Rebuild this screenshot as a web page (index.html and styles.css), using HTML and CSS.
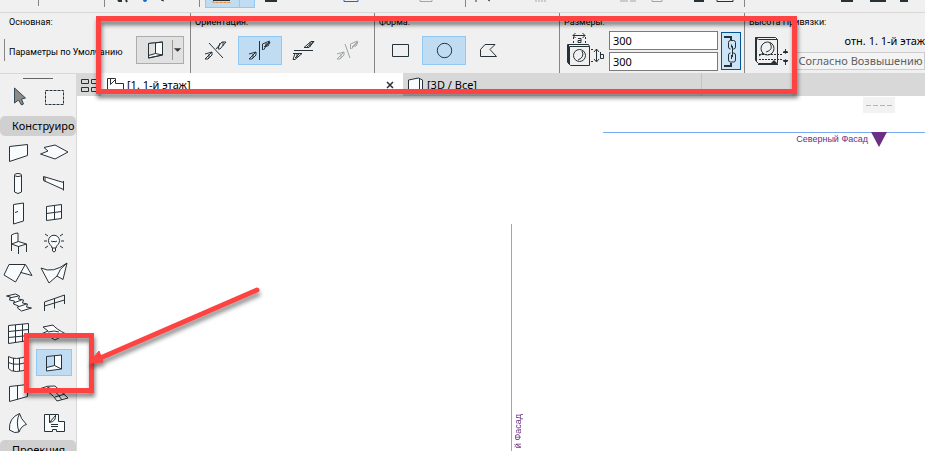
FILE: index.html
```html
<!DOCTYPE html>
<html lang="ru">
<head>
<meta charset="utf-8">
<title>План этажа</title>
<link rel="stylesheet" href="styles.css">
</head>
<body>
<div class="strip">
  <svg width="925" height="12" viewBox="0 0 925 12" aria-hidden="true">
    <path class="rule" d="M38.500 0v6M104.500 0v7M199.500 0v7M465.500 0v7M744.500 0v7"/>
    <rect class="lit" x="205.500" y="-2" width="49" height="9.500"/>
    <path class="litline" d="M239.500 0v7"/>
    <path class="dark" d="M118 0l1 1h3M126 0l1 2M213 0h17M265 1h12M271 0v1M694 1h10M841 1h12M870 1h16M900 1h8"/>
    <circle cx="145" cy="0" r="2" fill="#1769d2"/>
    <path d="M161 0l3 1M476 0v2M488 0l2 1" class="thin"/>
    <path d="M213 1v1.500h17V1" fill="none" stroke="#f28a2e" stroke-dasharray="3 1"/>
    <path d="M344 0v1.500h14V0" fill="none" stroke="#1769d2"/>
    <path d="M420 0v1.500h12V0M536 0v2M539 0v2M542 0v2M545 0v2M620 1h8M630 1h6M652 0v1.500h10V0" fill="none" stroke="#a5a5a5"/>
    <path d="M717 0v1.500h16V0" class="thin"/>
  </svg>
</div>

<header class="info">
  <section class="group group-main">
    <h2>Основная:</h2>
    <div class="main-row">
      <span class="grip"></span>
      <span class="preset">Параметры по Умолчанию</span>
      <button class="type" aria-label="Световой люк">
        <svg width="35" height="26" viewBox="0 0 35 26"><path class="paper" d="M11.500 6.500l14-1.500v13l-14 3z"/><path d="M11.500 6.500l7-1v11l-7 2z" fill="#e1e1e1"/><path class="thin" d="M11.500 6.500l14-1.500v13l-14 3zM18.500 6v10.500M11.500 18.500l7-2 7 1.500"/></svg>
        <svg class="drop" width="12" height="20" viewBox="0 0 12 20"><path d="M1 8h8l-4 4z" fill="#333"/></svg>
      </button>
    </div>
  </section>
  <section class="group">
    <h2>Ориентация:</h2>
    <div class="choices">
      <button aria-label="Наклонно"><svg width="42" height="27" viewBox="0 0 42 27"><path class="thin" d="M14 6l14 15"/><path class="thin" d="M10 17l7-2-7 7h3l4-4v-3M14 17v4M21 12l6-7h4l-6 7h-2l2-6M28 5v4"/></svg></button>
      <button class="on" aria-label="Вертикально"><svg width="42" height="27" viewBox="0 0 42 27"><path class="thin" d="M20.500 4v19"/><path class="thin" d="M10 17l7-2-7 7h3l4-4v-3M14 17v4M23.500 13V7l7-3-6 9M25 10l6-5-2 4h-3M27 6v4"/></svg></button>
      <button aria-label="Горизонтально"><svg width="42" height="27" viewBox="0 0 42 27"><path class="thin" d="M11 13.500h19"/><path class="thin" d="M10 16.500h9l-7 6h-2l2-6M12 21l4-4M14 17v4M21 10.500l7-6h3l-5 6zM27 5v5M24 10l6-5"/></svg></button>
      <button class="off" aria-label="Свободно" disabled><svg width="42" height="27" viewBox="0 0 42 27"><path class="thin" d="M18 7l5 14"/><path class="thin" d="M10 17l7-2-7 7h3l4-4v-3M14 17v4M23.500 12V7l7-3-6 8M25 10l6-5-2 4h-3"/></svg></button>
    </div>
  </section>
  <section class="group">
    <h2>Форма:</h2>
    <div class="choices">
      <button aria-label="Прямоугольник"><svg width="42" height="27" viewBox="0 0 42 27"><path class="thin" d="M13.500 7.500h16v12h-16z"/></svg></button>
      <button class="on" aria-label="Круг"><svg width="42" height="27" viewBox="0 0 42 27"><circle class="thin" cx="21.500" cy="13.500" r="7.200"/></svg></button>
      <button aria-label="Многоугольник"><svg width="42" height="27" viewBox="0 0 42 27"><path class="thin" d="M18 7.500h10l-5 5 6.500 7h-16v-7z"/></svg></button>
    </div>
  </section>
  <section class="group group-size">
    <h2>Размеры:</h2>
    <div class="size-row">
      <svg class="size-icon" width="39" height="36" viewBox="0 0 39 36" aria-hidden="true">
        <path class="thin" d="M.500 12.500h21l1 2v19h-19l-3-3zM2.500 14.500h20M2.500 14.500v18M1.500 13v18"/><circle class="thin" cx="12.500" cy="23.500" r="6"/><path class="thin" d="M15 19q3 6-4 9"/>
        <path class="thin" d="M6 3.500h12M8.500 1L6 3.500 8.500 6M15.500 1L18 3.500 15.500 6"/><path class="thin" stroke-dasharray="2 2" d="M6.500 5v7M18.500 5v7M24 17.500h4M24 29.500h4"/>
        <path class="thin" d="M29.500 17v12M27 20l2.500-3 2.500 3M27 27l2.500 3 2.500-3"/><path class="thin" d="M11 6.500h3v4h-3v-2h3M33.500 20v6.500h3v-4h-3"/>
      </svg>
      <div class="fields">
        <input type="text" value="300" aria-label="Размер a">
        <input type="text" value="300" aria-label="Размер b">
      </div>
      <button class="link" aria-label="Связать размеры">
        <svg width="18" height="36" viewBox="0 0 18 36"><path class="dark" d="M2 4h7v3M2 33h7v-3"/><path class="thin" d="M6.500 14V9.500q0-2 2-2h3q2 0 2 2V14q0 2-2 2h-1M6.500 22v5q0 2 2 2h3q2 0 2-2v-5q0-2-2-2h-1M9.500 11.500v3M10.500 13v11M9.500 22v4M6.500 14q0 2 2 2M6.500 22q0-2 2-2"/></svg>
      </button>
    </div>
  </section>
  <section class="group group-anchor">
    <h2>Высота Привязки:</h2>
    <div class="anchor-row">
      <svg width="36" height="32" viewBox="0 0 36 32" aria-hidden="true">
        <path class="thin" d="M1.500 1.500l3 2h19v24h-19l-3-3zM1.500 1.500h20l2 2M2.500 2v24M4 28.500h20"/><circle class="thin" cx="13.500" cy="12.500" r="6.500"/><path class="thin" d="M9 17l-4 3M16 7q4 7-4 9"/>
        <path class="thin" stroke-dasharray="2 1" d="M5 18.500h24M5 23.500h24"/><path d="M17 27l3-3 3 3z" fill="#263238"/><path class="thin" d="M31.500 13v4M29 16.500h5M31.500 29v-4M29 24.500h5"/><path d="M29 15h5l-2.500 3zM29 26h5l-2.500-3z" fill="#263238"/>
      </svg>
      <div class="anchor-text">
        <span>отн. 1. 1-й этаж</span>
        <button>Согласно Возвышению</button>
      </div>
    </div>
  </section>
</header>

<div class="work">
  <aside class="tools">
    <span class="handle"></span>
    <div class="grid pick">
      <button aria-label="Указатель"><svg viewBox="0 0 36 30"><path d="M14.500 6v15l4-3 3 5 2-1-2-5 4-1z" fill="#8a8a8a" stroke="#37474f"/></svg></button>
      <button aria-label="Бегущая рамка"><svg viewBox="0 0 36 30"><path class="thin" stroke-dasharray="3 1" d="M9.500 8.500h18v14h-18z"/></svg></button>
    </div>
    <h3>Конструиро</h3>
    <div class="grid">
      <button aria-label="Стена"><svg viewBox="0 0 36 30"><path class="paper" d="M9.500 8.500l18-2v11l-18 6z"/></svg></button>
      <button aria-label="Перекрытие"><svg viewBox="0 0 36 30"><path class="paper" d="M8 9.500l11-2.500 13 7-13 7-14.500-5 7.500-3z"/></svg></button>
      <button aria-label="Колонна"><svg viewBox="0 0 36 30"><path class="paper" d="M14.500 7v17q3.500 3 7 0V7"/><ellipse class="paper" cx="18" cy="7" rx="3.500" ry="1.500"/></svg></button>
      <button aria-label="Балка"><svg viewBox="0 0 36 30"><path class="paper" d="M7.500 8.500l20 6v7l-20-9zM9 9v4.500M27.500 13v9.500"/></svg></button>
      <button aria-label="Дверь"><svg viewBox="0 0 36 30"><path class="paper" d="M13.500 6.500l10-1.500v18l-10 3z"/><path class="thin" d="M15 14.500l3-1"/></svg></button>
      <button aria-label="Окно"><svg viewBox="0 0 36 30"><path class="paper" d="M10.500 8.500l15-2v14l-15 2z"/><path class="thin" d="M18.500 7.500v14M10.500 15.500l15-2"/></svg></button>
      <button aria-label="Объект"><svg viewBox="0 0 36 30"><path class="paper" d="M11.500 16V7q3-2 6.500-2v9M11.500 16l7-2.500 8 2.500-8 2.500z"/><path class="thin" d="M11.500 16v7M18.500 18v8M26.500 16v8"/></svg></button>
      <button aria-label="Источник света"><svg viewBox="0 0 36 30"><path class="paper" d="M16 20q0-2-2-3.500a5.500 5.500 0 1 1 8 0q-2 1.500-2 3.500zM16.500 20v3q1.500 2 3 0v-3"/><path class="thin" d="M15 13l2 1 1-1 1 1 2-1M8 13h3M25 13h3M9 6l3 2M27 6l-3 2M9 20l3-2M27 20l-3-2"/></svg></button>
      <button aria-label="Крыша"><svg viewBox="0 0 36 30"><path class="paper" d="M9 6.500h16.500l6.500 11-11-3-5.500 9.500L4 17z"/><path class="thin" d="M25 7l-4.500 8"/></svg></button>
      <button aria-label="Оболочка"><svg viewBox="0 0 36 30"><path class="paper" d="M5 10q12 6 26-5l-4 16.500-6-3.500-8 7z"/><path class="thin" d="M31 5q-8 6-10 13"/></svg></button>
      <button aria-label="Лестница"><svg viewBox="0 0 36 30"><path class="paper" d="M6.500 8l9-2 4 2-1 3 5 1-1 3 5 1-1 3 5 1-10 3-4-3 1-2-5-2 1-3-5-1 1-3z"/><path class="thin" d="M9.500 10l9-2M13.500 15l8-3M17.500 19l9-3"/></svg></button>
      <button aria-label="Ограждение"><svg viewBox="0 0 36 30"><path class="thin" d="M8.500 23v-9l20-7v9M18.500 10.500v10M8.500 18l20-6"/></svg></button>
      <button aria-label="Навесная стена"><svg viewBox="0 0 36 30"><path class="paper" d="M8.500 7.500l20-2v17l-20 3z"/><path class="thin" d="M15.500 7v17.500M22.500 6v17.500M8.500 13.500l20-2M8.500 19.500l20-2"/></svg></button>
      <button aria-label="Сетка"><svg viewBox="0 0 36 30"><path class="paper" d="M7 9l10-2q3 4 13 9l-11 6q-6-5-14-6l7-3z"/><path class="thin" d="M12 14q7-2 11 0"/></svg></button>
      <button aria-label="Остекление"><svg viewBox="0 0 36 30"><path class="paper" d="M8.500 8.500q3 2 8 2t12-3v13q-6 3-12 3t-8-3z"/><path class="thin" d="M13.500 10v13M19.500 10v13M24.500 9v13M8.500 14.500q8 4 20-1"/></svg></button>
      <button class="on" aria-label="Световой люк"><svg viewBox="0 0 36 30"><path d="M10.500 19.500l8-2V8l7-1v14l-15 2z" fill="#f9fbfc"/><path class="thin" d="M10.500 8.500l15-1.500v14l-15 2zM18.500 8v9.500M10.500 19.500l8-2 7 3.500"/></svg></button>
      <button aria-label="Торец стены"><svg viewBox="0 0 36 30"><path class="paper" d="M9.500 8.500l18-2v12l-18 5z"/><path class="thin" d="M17.500 7.500v14"/></svg></button>
      <button aria-label="Поверхность"><svg viewBox="0 0 36 30"><path class="paper" d="M3 11q9-4 16-3l13 12-11 3q-6-10-18-12z"/><path class="thin" d="M11 9q8 2 15 13M14 15l10-3M19 19l10-3"/></svg></button>
      <button aria-label="Морф"><svg viewBox="0 0 36 30"><path class="paper" d="M9.500 22q-1-12 10-16.500 1 5 7 11-5 1-7.500 7.500-4 2-9.500-2z"/><path class="thin" d="M19.500 5.500q-4 8-.5 18.500"/></svg></button>
      <button aria-label="Зона"><svg viewBox="0 0 36 30"><path class="paper" d="M8.500 6.500h5v8l6-7v-1h3v7h6v10h-8v-2h-4v2h-8z"/><path class="thin" d="M13.500 6.500h6q1 7-6 8M15 16.500h7M15 18.500h7"/></svg></button>
    </div>
    <h3>Проекция</h3>
  </aside>

  <main class="view">
    <nav class="tabs">
      <button class="overview" aria-label="Обзор вкладок"><svg width="24" height="22" viewBox="0 0 24 22"><path class="thin" d="M4.500 5.500h7v4h-7zM14.500 5.500h7v4h-7zM4.500 13.500h7v4h-7zM14.500 13.500h7v4h-7z"/></svg></button>
      <div class="tab active">
        <svg width="19" height="20" viewBox="0 0 19 20" aria-hidden="true"><path class="thin" d="M1.500 18V3.500h8v5h8V18M4.500 3.500v6l5-5"/></svg>
        <a href="#plan">[1. 1-й этаж]</a>
        <button class="close" aria-label="Закрыть"><svg width="8" height="8" viewBox="0 0 8 8"><path class="cross" d="M1 1l6 6M7 1L1 7"/></svg></button>
      </div>
      <div class="tab">
        <svg width="17" height="20" viewBox="0 0 17 20" aria-hidden="true"><path class="paper" d="M.500 18V5l10-2 4 2v13M11.500 3v15"/></svg>
        <a href="#model">[3D / Все]</a>
      </div>
      <div class="tab"></div>
    </nav>
    <div class="canvas">
      <span class="dash"></span>
      <span class="level"></span>
      <span class="north">Северный Фасад</span>
      <span class="pin"></span>
      <span class="axis"></span>
      <span class="side">й Фасад</span>
    </div>
  </main>
</div>

<div class="mark mark-bar"></div>
<div class="mark mark-tool"></div>
<svg class="arrow" width="190" height="100" viewBox="0 0 190 100" aria-hidden="true"><path d="M177 10L18 79" stroke="#ff4343" stroke-width="5" stroke-linecap="round"/><path d="M9 83l10-12 4 11z" fill="#ff4343" stroke="#ff4343" stroke-linejoin="round"/></svg>
</body>
</html>
```
FILE: styles.css
```css
* { box-sizing: border-box; }

body {
  margin: 0;
  height: 100vh;
  display: flex;
  flex-direction: column;
  overflow: hidden;
  position: relative;
  background: #fff;
  color: #000;
  font: 11px/16px "Noto Sans", "Open Sans", sans-serif;
}

h2, h3 { margin: 0; font-weight: 400; }
button { padding: 0; border: 0; background: none; color: inherit; font: inherit; }
svg { display: block; flex: none; }

.thin { fill: none; stroke: #263238; stroke-width: 1; }
.dark { fill: none; stroke: #263238; stroke-width: 2; }
.cross { fill: none; stroke: #263238; stroke-width: 1.5; }
.paper { fill: #f9fbfc; stroke: #263238; stroke-width: 1; }
.rule { fill: none; stroke: #858585; }
.lit { fill: #c0dcf3; stroke: #90c8f6; }
.litline { stroke: #90c8f6; }

.strip {
  flex: none;
  height: 13px;
  overflow: hidden;
  background: #f0f0f0;
  border-bottom: 1px solid #d8d8d8;
}

/* Info box */
.info {
  flex: none;
  display: grid;
  grid-template-columns: 191px 184px 185px 185px 1fr;
  height: 60px;
  background: #f0f0f0;
}
.group {
  min-width: 0;
  padding: 3px 4px 0 3px;
  border-right: 1px solid #858585;
  white-space: nowrap;
}
.group:last-child { border: 0; padding-right: 0; }
.group h2, .preset { font-family: Roboto, "Noto Sans", sans-serif; font-size: 9px; }
.group h2 { padding-left: 1px; line-height: 12px; }
.group-main { padding-left: 4px; }
.group-main h2 { padding-left: 5px; }
.main-row { display: flex; align-items: center; padding: 4px 2px 0 0; height: 40px; }
.grip { width: 1px; height: 22px; margin-right: 4px; background: #858585; }
.preset { flex: 1; min-width: 0; padding-top: 4px; }
.type { display: flex; align-items: center; width: 48px; height: 28px; background: #e1e1e1; border: 1px solid #adadad; }
.drop { border-left: 1px solid #999; }

.choices { display: flex; padding-top: 8px; }
.choices button { width: 44px; height: 29px; border: 1px solid transparent; }
.choices .on, .grid .on { background: #c0dcf3; border: 1px solid #90c8f6; }
.off { opacity: .4; }

.size-row { display: flex; gap: 3px; padding: 3px 0 0 4px; }
.size-icon { margin-top: 1px; }
.group-size { padding-right: 3px; }
.fields { flex: 1; min-width: 0; display: flex; flex-direction: column; gap: 2px; }
.fields input {
  width: 100%;
  height: 19px;
  padding: 0 3px;
  border: 1px solid #7a7a7a;
  background: #fff;
  font: inherit;
}
.link { width: 20px; height: 38px; margin-top: 1px; background: #cce4f7; border: 1px solid #00549a; }

.anchor-row { display: flex; gap: 6px; padding: 8px 0 0 6px; }
.anchor-text { flex: 1; min-width: 0; margin-top: -4px; display: flex; flex-direction: column; gap: 2px; }
.anchor-text span { align-self: flex-end; line-height: 18px; }
.anchor-text button { height: 18px; border: 1px solid #ccc; background: #f4f4f4; color: #606060; }

/* Work area */
.work { flex: 1; min-height: 0; display: flex; }
.tools { flex: none; width: 77px; overflow: hidden; background: #f0f0f0; border-top: 1px solid #d8d8d8; border-right: 1px solid #d8d8d8; }
.handle { display: block; width: 30px; height: 1px; margin: 4px 0 3px 23px; background: #666; }
.grid { display: grid; grid-template-columns: 36px 36px; grid-auto-rows: 30px; padding-bottom: 2px; }
.grid svg { width: 36px; height: 30px; }
.grid .on { height: 27px; margin-top: 1px; }
.grid .on svg { margin: -2px 0 0 -1px; }
.tools h3 { height: 20px; margin-bottom: 2px; padding-left: 12px; border-radius: 5px; background: #d0d0d0; font-size: 11px; line-height: 20px; white-space: nowrap; }
.pick { padding: 0; height: 34px; }

.view { flex: 1; min-width: 0; display: flex; flex-direction: column; }
.tabs { flex: none; display: flex; height: 23px; background: #d8d8d8; }
.tab { display: flex; align-items: center; width: 299px; padding: 0 9px 0 5px; border-right: 1px solid #c2c2c2; }
.tab a { color: inherit; text-decoration: none; padding-left: 2px; }
.tab:last-child { flex: 1; border: 0; }
.active { width: 302px; background: #fff; border: 0; }
.close { margin-left: auto; }

/* Drawing sheet */
.canvas { flex: 1; position: relative; overflow: hidden; font: 9px/12px "Liberation Sans", Arial, sans-serif; color: #6b2f85; }
.canvas span { position: absolute; white-space: nowrap; }
.dash { right: 30px; top: 1px; width: 32px; height: 16px; background: #f2f2f2; }
.dash::before { content: ""; position: absolute; left: 3px; right: 3px; top: 8px; height: 1px; background: repeating-linear-gradient(90deg, #f2a468 0 5px, transparent 5px 7px); }
.level { left: 526px; right: 0; top: 36px; height: 1px; background: #7aacf5; }
.north { right: 57px; top: 37px; }
.pin { right: 38px; top: 36px; border: solid transparent; border-width: 15px 8px 0; border-top-color: #6b2f85; }
.axis { left: 434px; top: 128px; bottom: 0; width: 1px; background: #7aacf5; }
.side { left: 435px; top: 318px; writing-mode: vertical-rl; transform: rotate(180deg); }

/* Callouts laid over the window */
.mark { position: absolute; border: 5px solid #ff4343; filter: drop-shadow(1px 4px 2px rgba(0, 0, 0, .5)); pointer-events: none; }
.mark-bar { left: 96px; top: 16px; width: 701px; height: 78px; }
.mark-tool { left: 24px; top: 333px; width: 70px; height: 60px; }
.arrow { position: absolute; left: 80px; top: 280px; filter: drop-shadow(1px 4px 2px rgba(0, 0, 0, .45)); pointer-events: none; }
```
